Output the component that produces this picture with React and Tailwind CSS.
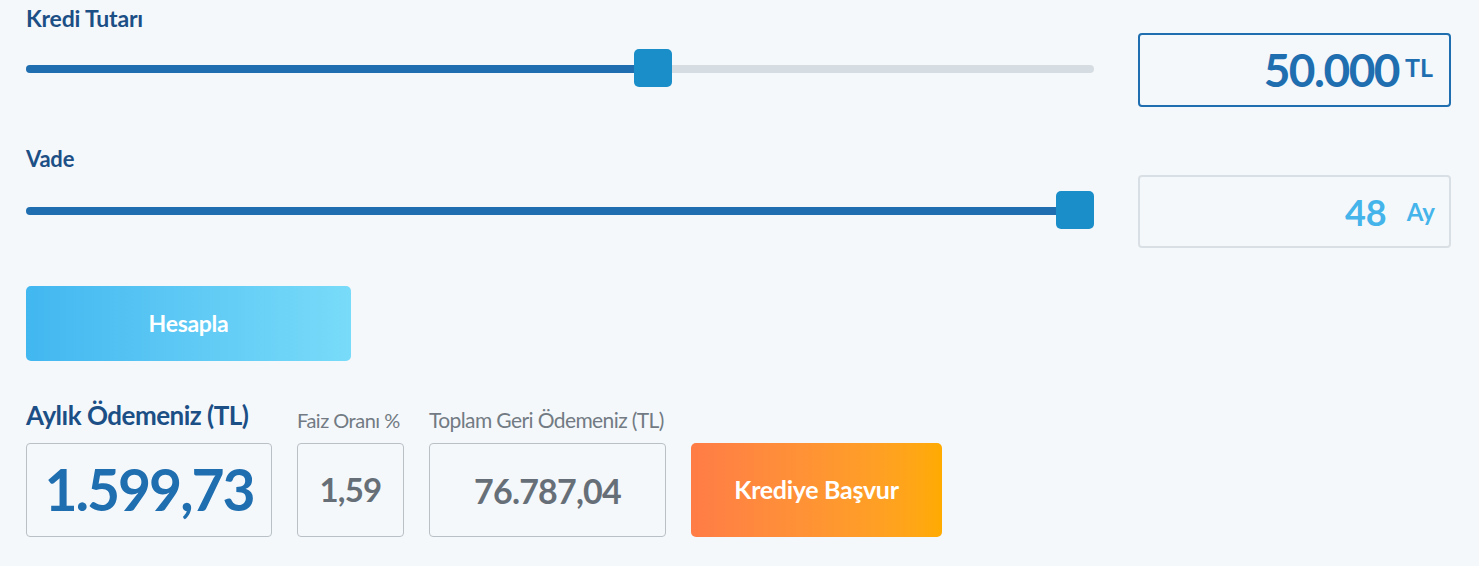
import React, { useState } from 'react';

const Slider = ({ percent }) => {
    // thumb overlaps the track, so it's absolutely placed inside the slider box
    return (
        <div className="relative h-[38px] flex items-center">
            <div className="w-full h-[8px] mt-[2px] rounded-full bg-[#d5dde3] overflow-hidden">
                <div className="h-full bg-[#1e6eb0]" style={{ width: `${percent}%` }} />
            </div>
            <div
                className="absolute top-0 w-[38px] h-[38px] rounded-[5px] bg-[#1a8ec8]"
                style={{ left: `calc(${percent}% - ${(percent / 100) * 38}px)` }}
            />
        </div>
    );
};

const App = () => {
    const [tutar] = useState(50000);
    const [vade] = useState(48);

    return (
        <div className="w-full h-[566px] bg-[#f5f8fb] pl-[26px] pr-[28px] text-[#1b4f85]" style={{ fontFamily: 'Lato, "Noto Sans", sans-serif' }}>
            {/* Kredi Tutarı */}
            <div className="flex items-start gap-[44px]">
                <div className="flex-1 pt-[5px]">
                    <div className="text-[23px] leading-[26px] font-bold tracking-[-0.2px]">Kredi Tutarı</div>
                    <div className="mt-[18px]">
                        <Slider percent={59} />
                    </div>
                </div>
                <div className="w-[313px] mt-[33px] h-[74px] border-2 border-[#1e6eb0] rounded-[4px] flex items-center justify-end pr-[16px] text-[#1e6eb0]">
                    <span className="text-[46px] font-bold tracking-[-1.5px] leading-none">{tutar.toLocaleString('tr-TR')}</span>
                    <span className="text-[25px] font-bold ml-[6px] self-start mt-[20px] leading-none">TL</span>
                </div>
            </div>

            {/* Vade */}
            <div className="flex items-start gap-[44px] mt-[39px]">
                <div className="flex-1">
                    <div className="text-[22px] leading-[26px] font-bold tracking-[-0.2px]">Vade</div>
                    <div className="mt-[19px]">
                        <Slider percent={100} />
                    </div>
                </div>
                <div className="w-[313px] mt-[29px] h-[73px] border-2 border-[#d9e0e5] rounded-[4px] flex items-center justify-end pr-[14px] text-[#45b4ea]">
                    <span className="text-[36px] font-bold leading-none">{vade}</span>
                    <span className="text-[24px] font-bold ml-[20px] leading-none">Ay</span>
                </div>
            </div>

            <button className="mt-[38px] w-[325px] h-[75px] rounded-[5px] bg-gradient-to-r from-[#41b7f0] to-[#78dbf9] text-white text-[23px] font-bold tracking-[-0.3px]">
                Hesapla
            </button>

            {/* Sonuçlar */}
            <div className="flex items-end gap-[25px] mt-[38px]">
                <div className="flex flex-col">
                    <div className="text-[26px] leading-[32px] font-bold tracking-[-0.5px] mb-[12px]">Aylık Ödemeniz (TL)</div>
                    <div className="w-[246px] h-[94px] border border-[#b9c0c6] rounded-[4px] flex items-center justify-center text-[#1e6eb0] text-[57px] font-bold tracking-[-2px]">
                        1.599,73
                    </div>
                </div>
                <div className="flex flex-col">
                    <div className="text-[20px] leading-[26px] text-[#727b83] tracking-[-0.5px] mb-[10px]">Faiz Oranı %</div>
                    <div className="w-[107px] h-[94px] border border-[#b9c0c6] rounded-[4px] flex items-center justify-center text-[#666f77] text-[33px] font-bold tracking-[-0.8px]">
                        1,59
                    </div>
                </div>
                <div className="flex flex-col">
                    <div className="text-[21px] leading-[26px] text-[#727b83] tracking-[-0.6px] mb-[10px]">Toplam Geri Ödemeniz (TL)</div>
                    <div className="w-[237px] h-[94px] border border-[#b9c0c6] rounded-[4px] flex items-center justify-center text-[#666f77] text-[34px] font-bold tracking-[-0.8px]">
                        76.787,04
                    </div>
                </div>
                <button className="w-[251px] h-[94px] rounded-[5px] bg-gradient-to-r from-[#ff7c46] to-[#ffab00] text-white text-[25px] font-bold tracking-[-0.3px]">
                    Krediye Başvur
                </button>
            </div>
        </div>
    );
};

export default App;
